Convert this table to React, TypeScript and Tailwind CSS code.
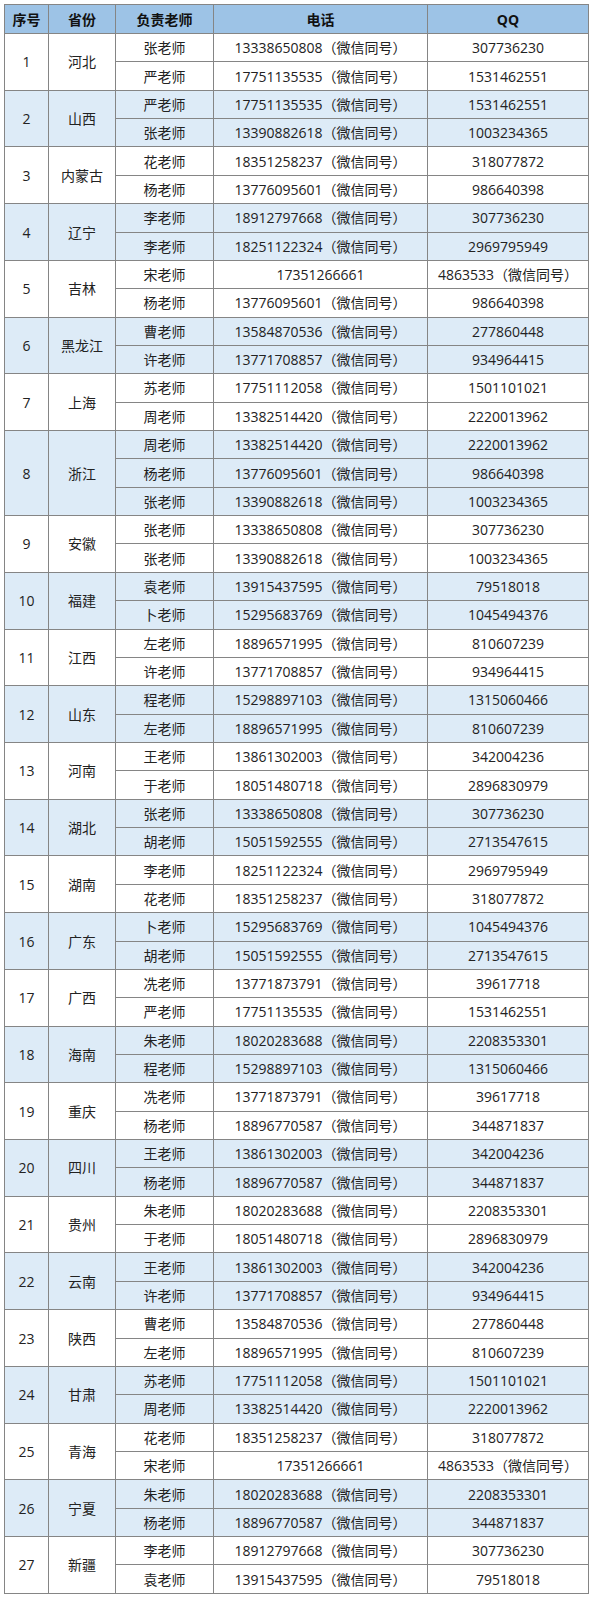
const W = "（微信同号）";

type Teacher = { name: string; phone: string; qq: string };
type Province = { no: number; name: string; teachers: Teacher[] };

const t = (name: string, phone: string, qq: string): Teacher => ({ name, phone, qq });

const provinces: Province[] = [
  { no: 1, name: "河北", teachers: [t("张老师", "13338650808" + W, "307736230"), t("严老师", "17751135535" + W, "1531462551")] },
  { no: 2, name: "山西", teachers: [t("严老师", "17751135535" + W, "1531462551"), t("张老师", "13390882618" + W, "1003234365")] },
  { no: 3, name: "内蒙古", teachers: [t("花老师", "18351258237" + W, "318077872"), t("杨老师", "13776095601" + W, "986640398")] },
  { no: 4, name: "辽宁", teachers: [t("李老师", "18912797668" + W, "307736230"), t("李老师", "18251122324" + W, "2969795949")] },
  { no: 5, name: "吉林", teachers: [t("宋老师", "17351266661", "4863533" + W), t("杨老师", "13776095601" + W, "986640398")] },
  { no: 6, name: "黑龙江", teachers: [t("曹老师", "13584870536" + W, "277860448"), t("许老师", "13771708857" + W, "934964415")] },
  { no: 7, name: "上海", teachers: [t("苏老师", "17751112058" + W, "1501101021"), t("周老师", "13382514420" + W, "2220013962")] },
  {
    no: 8,
    name: "浙江",
    teachers: [
      t("周老师", "13382514420" + W, "2220013962"),
      t("杨老师", "13776095601" + W, "986640398"),
      t("张老师", "13390882618" + W, "1003234365"),
    ],
  },
  { no: 9, name: "安徽", teachers: [t("张老师", "13338650808" + W, "307736230"), t("张老师", "13390882618" + W, "1003234365")] },
  { no: 10, name: "福建", teachers: [t("袁老师", "13915437595" + W, "79518018"), t("卜老师", "15295683769" + W, "1045494376")] },
  { no: 11, name: "江西", teachers: [t("左老师", "18896571995" + W, "810607239"), t("许老师", "13771708857" + W, "934964415")] },
  { no: 12, name: "山东", teachers: [t("程老师", "15298897103" + W, "1315060466"), t("左老师", "18896571995" + W, "810607239")] },
  { no: 13, name: "河南", teachers: [t("王老师", "13861302003" + W, "342004236"), t("于老师", "18051480718" + W, "2896830979")] },
  { no: 14, name: "湖北", teachers: [t("张老师", "13338650808" + W, "307736230"), t("胡老师", "15051592555" + W, "2713547615")] },
  { no: 15, name: "湖南", teachers: [t("李老师", "18251122324" + W, "2969795949"), t("花老师", "18351258237" + W, "318077872")] },
  { no: 16, name: "广东", teachers: [t("卜老师", "15295683769" + W, "1045494376"), t("胡老师", "15051592555" + W, "2713547615")] },
  { no: 17, name: "广西", teachers: [t("冼老师", "13771873791" + W, "39617718"), t("严老师", "17751135535" + W, "1531462551")] },
  { no: 18, name: "海南", teachers: [t("朱老师", "18020283688" + W, "2208353301"), t("程老师", "15298897103" + W, "1315060466")] },
  { no: 19, name: "重庆", teachers: [t("冼老师", "13771873791" + W, "39617718"), t("杨老师", "18896770587" + W, "344871837")] },
  { no: 20, name: "四川", teachers: [t("王老师", "13861302003" + W, "342004236"), t("杨老师", "18896770587" + W, "344871837")] },
  { no: 21, name: "贵州", teachers: [t("朱老师", "18020283688" + W, "2208353301"), t("于老师", "18051480718" + W, "2896830979")] },
  { no: 22, name: "云南", teachers: [t("王老师", "13861302003" + W, "342004236"), t("许老师", "13771708857" + W, "934964415")] },
  { no: 23, name: "陕西", teachers: [t("曹老师", "13584870536" + W, "277860448"), t("左老师", "18896571995" + W, "810607239")] },
  { no: 24, name: "甘肃", teachers: [t("苏老师", "17751112058" + W, "1501101021"), t("周老师", "13382514420" + W, "2220013962")] },
  { no: 25, name: "青海", teachers: [t("花老师", "18351258237" + W, "318077872"), t("宋老师", "17351266661", "4863533" + W)] },
  { no: 26, name: "宁夏", teachers: [t("朱老师", "18020283688" + W, "2208353301"), t("杨老师", "18896770587" + W, "344871837")] },
  { no: 27, name: "新疆", teachers: [t("李老师", "18912797668" + W, "307736230"), t("袁老师", "13915437595" + W, "79518018")] },
];

const cell = "border border-[#858585] text-center align-middle p-0";

export default function App() {
  return (
    <div
      className="bg-white pt-[4px] pl-[4px] pb-[5px] text-[14px] text-[#222]"
      style={{ fontFamily: '"Open Sans", "Noto Sans CJK SC", sans-serif' }}
    >
      <table className="border-collapse table-fixed w-[584px]">
        <colgroup>
          <col className="w-[44px]" />
          <col className="w-[67px]" />
          <col className="w-[98px]" />
          <col className="w-[214px]" />
          <col className="w-[161px]" />
        </colgroup>
        <thead>
          <tr className="h-[29px] bg-[#9dc3e6] font-bold text-[#111]">
            <th className={cell}>序号</th>
            <th className={cell}>省份</th>
            <th className={cell}>负责老师</th>
            <th className={cell}>电话</th>
            <th className={cell}>QQ</th>
          </tr>
        </thead>
        <tbody>
          {provinces.map((p) =>
            p.teachers.map((tc, i) => (
              <tr key={`${p.no}-${i}`} className={`h-[28.36px] ${p.no % 2 === 0 ? "bg-[#ddebf7]" : "bg-white"}`}>
                {i === 0 && (
                  <>
                    <td className={cell} rowSpan={p.teachers.length}>
                      {p.no}
                    </td>
                    <td className={cell} rowSpan={p.teachers.length}>
                      {p.name}
                    </td>
                  </>
                )}
                <td className={cell}>{tc.name}</td>
                <td className={cell}>{tc.phone}</td>
                <td className={cell}>{tc.qq}</td>
              </tr>
            ))
          )}
        </tbody>
      </table>
    </div>
  );
}
